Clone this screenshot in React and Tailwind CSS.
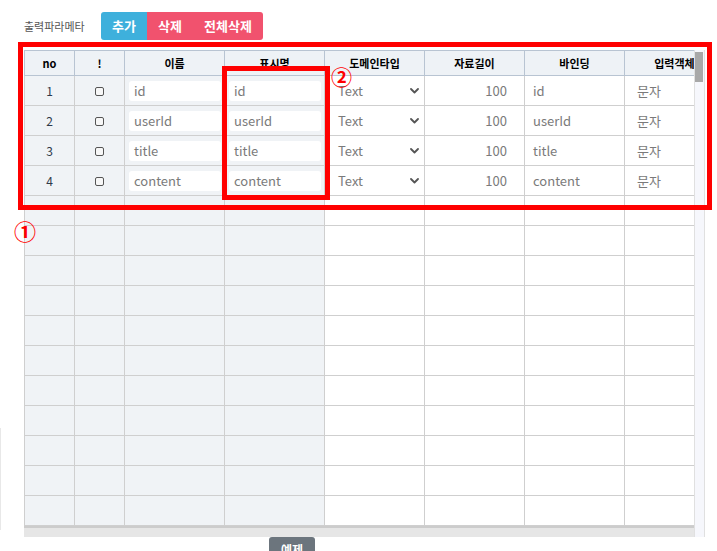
import React from "react";

const filled = [
  { no: 1, name: "id" },
  { no: 2, name: "userId" },
  { no: 3, name: "title" },
  { no: 4, name: "content" },
];

const headers = [
  { t: "no", w: "w-[51px] border-l" },
  { t: "!", w: "w-[50px]" },
  { t: "이름", w: "w-[100px]" },
  { t: "표시명", w: "w-[100px]" },
  { t: "도메인타입", w: "w-[100px]" },
  { t: "자료길이", w: "w-[100px]" },
  { t: "바인딩", w: "w-[100px]" },
  { t: "입력객체", w: "w-[100px]" },
];

function Chevron() {
  return (
    <svg width="9" height="6" viewBox="0 0 9 6" className="shrink-0">
      <path d="M1 1l3.5 3.5L8 1" fill="none" stroke="#555" strokeWidth="1.8" strokeLinecap="round" strokeLinejoin="round" />
    </svg>
  );
}

function Input({ v }) {
  return (
    <div className="w-full h-[20px] rounded-[3px] bg-white pl-[5px] flex items-center text-[13px] text-[#7a7a7a]">
      {v}
    </div>
  );
}

function Row({ r }) {
  const L = "shrink-0 h-full bg-[#f0f3f6] border-r border-b border-[#cfcfcf]";
  const R = "shrink-0 h-full bg-white border-r border-b border-[#cfcfcf]";
  return (
    <div className="flex h-[30px]">
      <div className={`${L} w-[51px] border-l flex items-center justify-center text-[12px] text-[#2f3a4a]`}>{r ? r.no : ""}</div>
      <div className={`${L} w-[50px] flex items-center justify-center`}>
        {r ? <div className="w-[9px] h-[9px] mt-[2px] rounded-[2px] border-[1.5px] border-[#555] bg-[#f7f7f7]" /> : null}
      </div>
      <div className={`${L} w-[100px] flex items-center pl-[4px] pr-[3px] pt-[1px]`}>{r ? <Input v={r.name} /> : null}</div>
      <div className={`${L} w-[100px] flex items-center pl-[4px] pr-[3px] pt-[1px]`}>{r ? <Input v={r.name} /> : null}</div>
      <div className={`${R} w-[100px] flex items-center justify-between pl-[13px] pr-[5px] text-[13px] text-[#7a7a7a]`}>
        {r ? (<><span>Text</span><Chevron /></>) : null}
      </div>
      <div className={`${R} w-[100px] flex items-center justify-end pr-[17px] text-[13px] text-[#7a7a7a]`}>{r ? "100" : ""}</div>
      <div className={`${R} w-[100px] flex items-center pl-[8px] text-[13px] text-[#7a7a7a]`}>{r ? r.name : ""}</div>
      <div className={`${R} w-[100px] flex items-center pl-[12px] text-[13px] text-[#7a7a7a]`}>{r ? "문자" : ""}</div>
    </div>
  );
}

export default function App() {
  const rows = Array.from({ length: 15 }, (_, i) => filled[i] || null);
  return (
    <div
      className="relative w-[717px] h-[551px] overflow-hidden bg-white"
      style={{ fontFamily: '"Noto Sans CJK KR", "Noto Sans", sans-serif' }}
    >
      <div className="flex items-center pl-[24px] pt-[12px]">
        <span className="text-[11px] text-[#555] w-[77px]">출력파라메타</span>
        <div className="flex h-[28px] text-[13px] font-bold text-white">
          <div className="w-[46px] flex items-center justify-center bg-[#3eb0dc] rounded-l-[3px]">추가</div>
          <div className="w-[46px] flex items-center justify-center bg-[#f1526e]">삭제</div>
          <div className="w-[70px] flex items-center justify-center bg-[#f1526e] rounded-r-[3px]">전체삭제</div>
        </div>
      </div>

      <div className="flex ml-[24px] mt-[10px] w-[681px] h-[487px]">
        <div className="w-[670px] flex flex-col">
          <div className="w-[670px] overflow-hidden flex-1">
            <div className="flex h-[26px] w-[800px]">
              {headers.map((h) => (
                <div
                  key={h.t}
                  className={`${h.w} shrink-0 h-full bg-[#eef2f6] border-t border-r border-b border-[#b8c4d2] flex items-center justify-center text-[11px] font-bold text-black`}
                >
                  {h.t}
                </div>
              ))}
            </div>
            <div className="w-[800px]">
              {rows.map((r, i) => (
                <Row key={i} r={r} />
              ))}
            </div>
          </div>
          <div className="h-[11px] shrink-0 border-t-2 border-[#cccccc] bg-[#e6e6e6]" />
        </div>
        <div className="w-[11px] h-full bg-[#f6f7fc] border-l border-r border-[#e0e0e0] pt-[2px]">
          <div className="w-[8px] h-[30px] bg-[#a8a8a8]" />
        </div>
      </div>

      <div className="ml-[269px] w-[46px] h-[20px] rounded-t-[3px] bg-[#6c757d] flex justify-center pt-[4px] text-[12px] font-bold text-white">
        예제
      </div>

      {/* faint outer line at left */}
      <div className="absolute left-0 top-[428px] w-px h-[102px] bg-[#e8e8e8]" />

      {/* annotation boxes */}
      <div className="absolute left-[18px] top-[42px] w-[694px] h-[168px] border-[5px] border-[#ff0000]" />
      <div className="absolute left-[222px] top-[66px] w-[108px] h-[134px] border-[5px] border-[#ff0000]" />
      <div className="absolute left-[14px] top-[219px] text-[22px] font-bold leading-none text-[#ff0000]">①</div>
      <div className="absolute left-[331px] top-[66px] text-[21px] font-bold leading-none text-[#ff0000]">②</div>
    </div>
  );
}
